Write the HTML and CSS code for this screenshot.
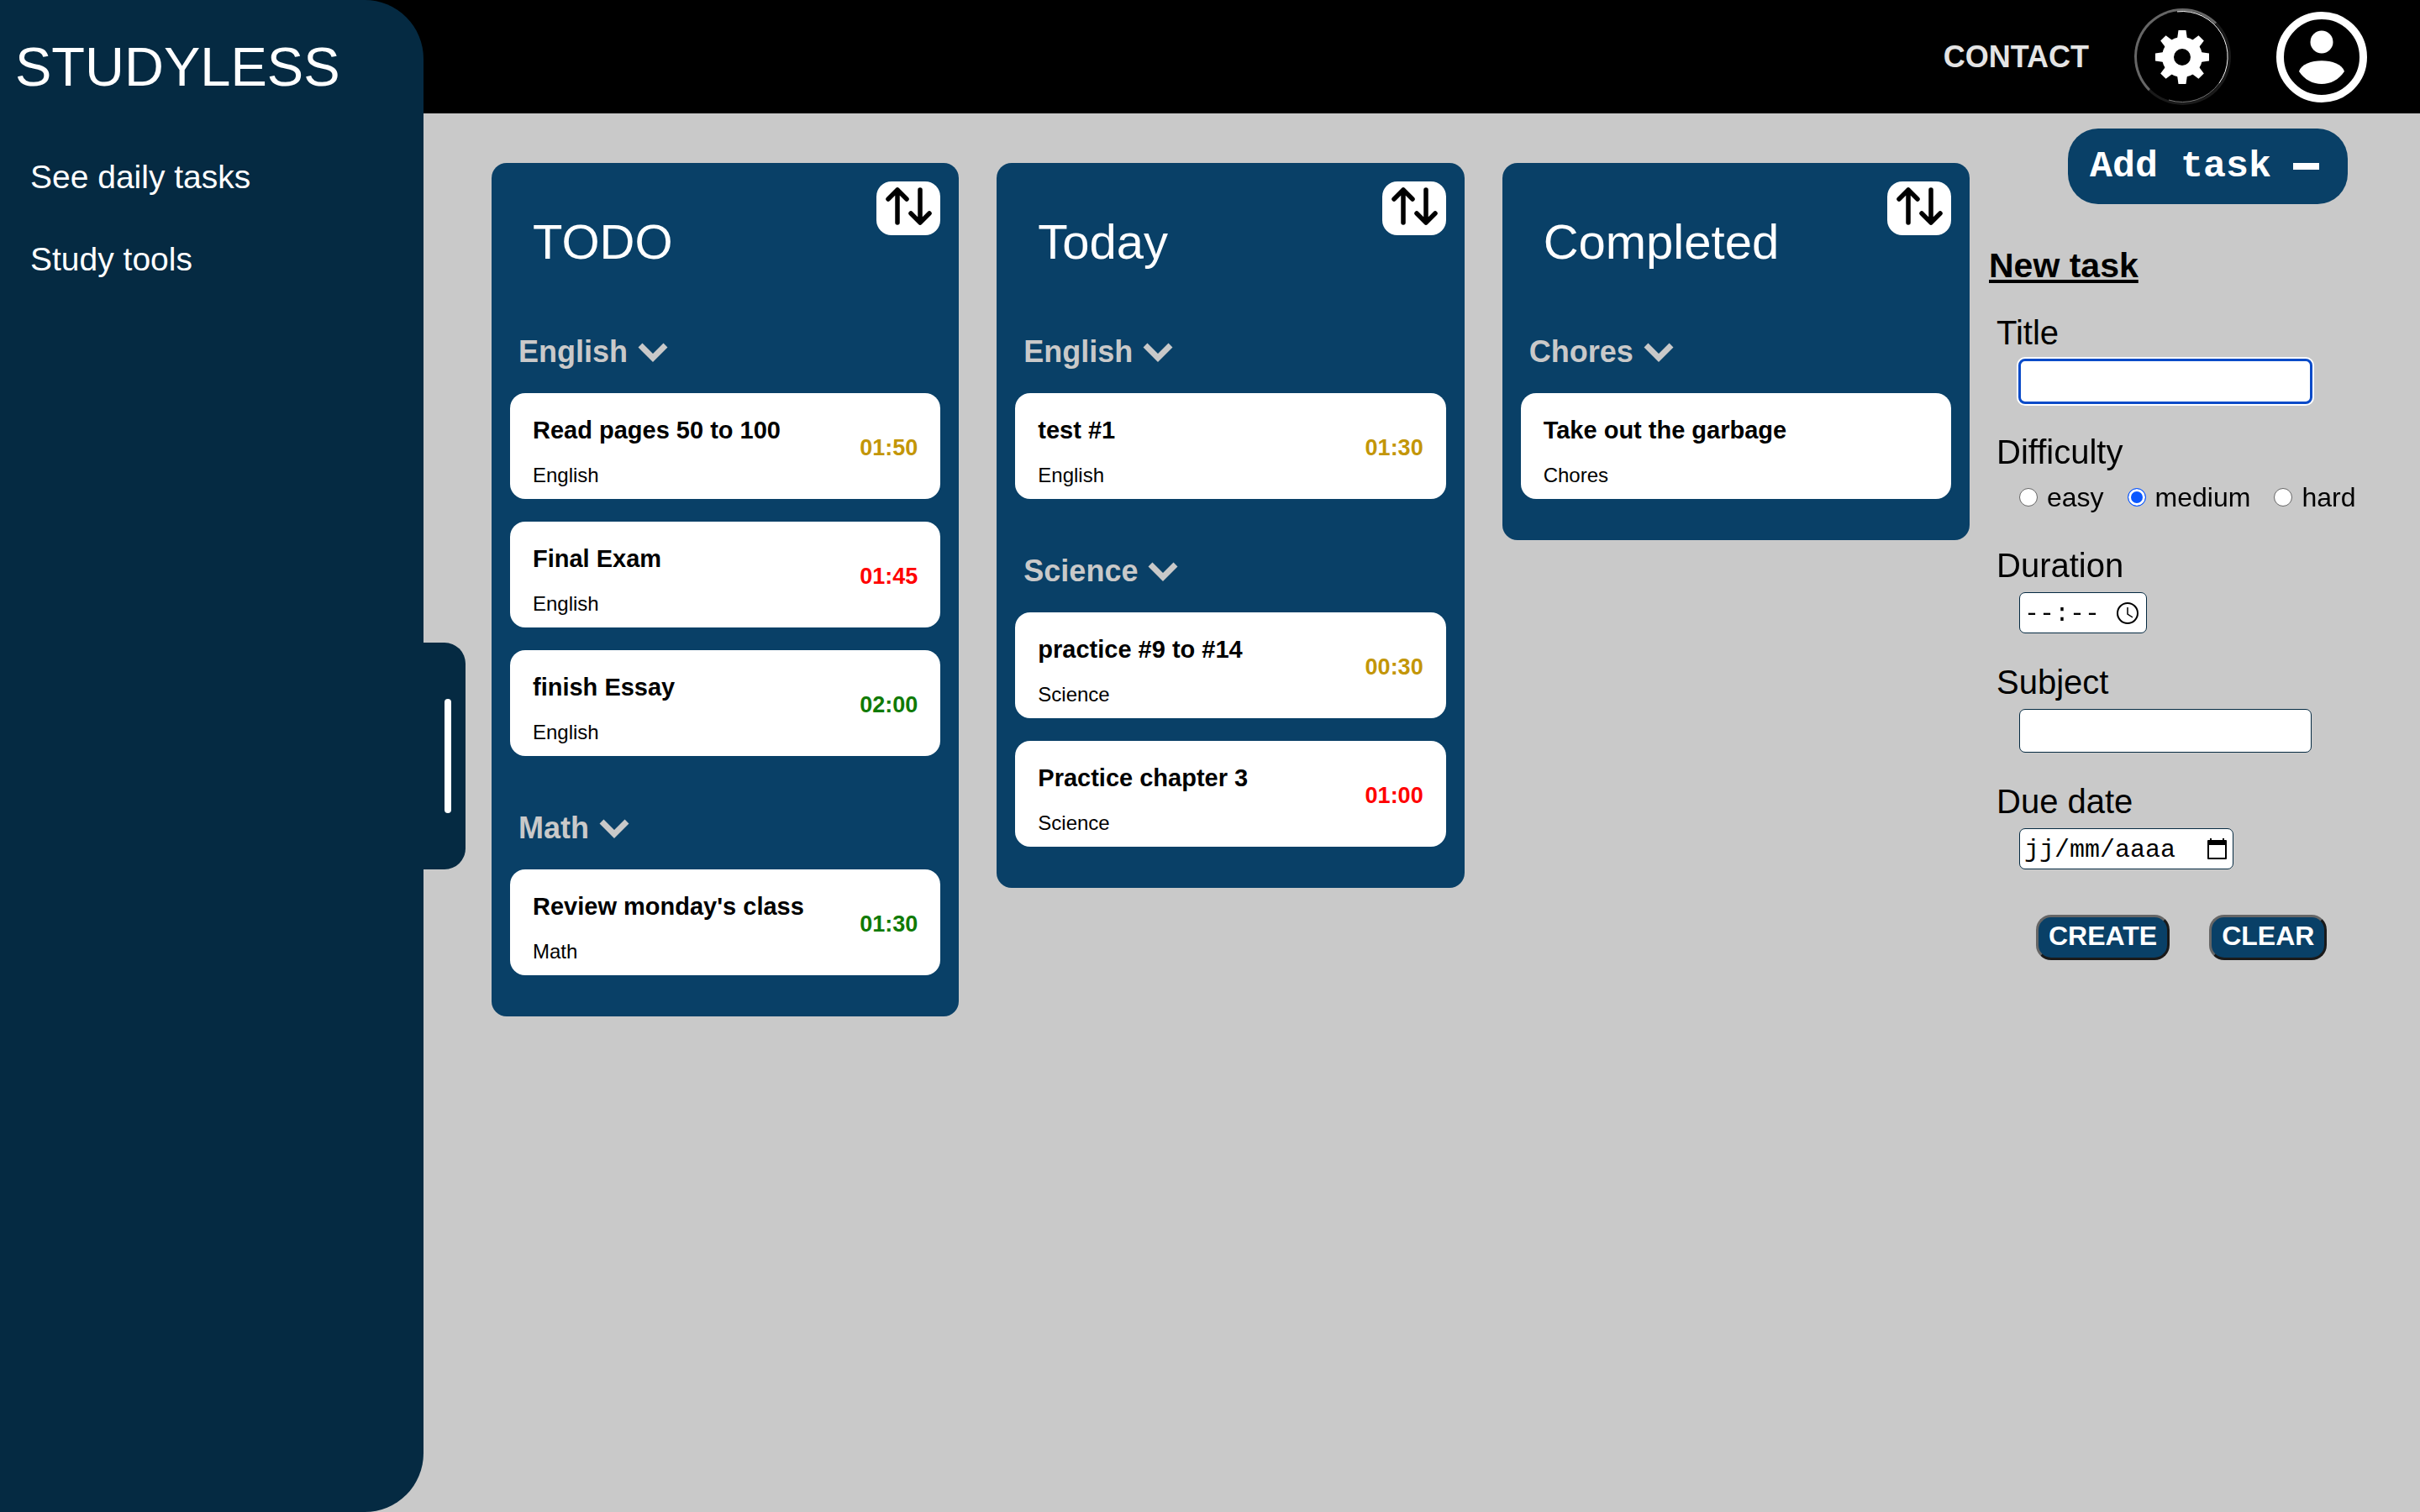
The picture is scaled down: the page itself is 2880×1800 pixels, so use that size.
FILE: index.html
```html
<!DOCTYPE html>
<html lang="en">
<head>
<meta charset="utf-8">
<title>Studyless</title>
<link rel="stylesheet" href="styles.css">
</head>
<body>
<svg class="sprite" aria-hidden="true">
  <symbol id="chevron" viewBox="0 0 36 24"><path d="M3 4 18 19 33 4" fill="none" stroke="currentColor" stroke-width="7"/></symbol>
  <symbol id="sort" viewBox="0 0 56 46"><path d="M15 43V4M4 15 15 4 26 15M42 4V43M31 32 42 43 53 32" fill="none" stroke="currentColor" stroke-width="5.5" stroke-linecap="round" stroke-linejoin="round"/></symbol>
</svg>
<div class="app">
  <aside class="sidebar">
    <h1 class="brand">STUDYLESS</h1>
    <nav class="side-nav">
      <a href="#daily">See daily tasks</a>
      <a href="#tools">Study tools</a>
    </nav>
    <button class="handle" type="button" aria-label="Toggle menu"><span class="handle-bar"></span></button>
  </aside>
  <div class="page">
    <header class="topbar">
      <a class="contact" href="#contact">CONTACT</a>
      <button class="gear" type="button" aria-label="Settings">
        <svg viewBox="0 0 109 109" aria-hidden="true">
          <path d="M48 .9A54 54 0 0 1 98 86" fill="none" stroke="#fff"/>
          <path d="M98 86A54 54 0 0 1 38 106" fill="none" stroke="#777"/>
          <g fill="#fff" transform="translate(21 22)"><path id="tooth" d="M28.500 1h9l2 14h-13z"/><use href="#tooth" transform="rotate(45 33 33)"/><use href="#tooth" transform="rotate(90 33 33)"/><use href="#tooth" transform="rotate(135 33 33)"/><use href="#tooth" transform="rotate(180 33 33)"/><use href="#tooth" transform="rotate(225 33 33)"/><use href="#tooth" transform="rotate(270 33 33)"/><use href="#tooth" transform="rotate(315 33 33)"/><circle cx="33" cy="33" r="17" fill="none" stroke="#fff" stroke-width="14"/></g>
        </svg>
      </button>
      <button class="profile" type="button" aria-label="Profile">
        <svg viewBox="0 0 108 108" aria-hidden="true"><circle cx="54" cy="54" r="49.500" fill="none" stroke="#fff" stroke-width="9"/><circle cx="54" cy="36" r="13.500" fill="#fff"/><path d="M27 71C32 54 76 54 81 71 68 91 40 91 27 71z" fill="#fff"/></svg>
      </button>
    </header>
    <div class="content">
      <main class="board">
        <section class="column">
          <div class="column-head"><h2>TODO</h2><button class="sort" type="button" aria-label="Sort"><svg><use href="#sort"/></svg></button></div>
          <div class="group">
            <button class="group-name" type="button">English<svg><use href="#chevron"/></svg></button>
            <article class="task"><div class="task-text"><h3>Read pages 50 to 100</h3><p>English</p></div><span class="time medium">01:50</span></article>
            <article class="task"><div class="task-text"><h3>Final Exam</h3><p>English</p></div><span class="time hard">01:45</span></article>
            <article class="task"><div class="task-text"><h3>finish Essay</h3><p>English</p></div><span class="time easy">02:00</span></article>
          </div>
          <div class="group">
            <button class="group-name" type="button">Math<svg><use href="#chevron"/></svg></button>
            <article class="task"><div class="task-text"><h3>Review monday's class</h3><p>Math</p></div><span class="time easy">01:30</span></article>
          </div>
        </section>
        <section class="column">
          <div class="column-head"><h2>Today</h2><button class="sort" type="button" aria-label="Sort"><svg><use href="#sort"/></svg></button></div>
          <div class="group">
            <button class="group-name" type="button">English<svg><use href="#chevron"/></svg></button>
            <article class="task"><div class="task-text"><h3>test #1</h3><p>English</p></div><span class="time medium">01:30</span></article>
          </div>
          <div class="group">
            <button class="group-name" type="button">Science<svg><use href="#chevron"/></svg></button>
            <article class="task"><div class="task-text"><h3>practice #9 to #14</h3><p>Science</p></div><span class="time medium">00:30</span></article>
            <article class="task"><div class="task-text"><h3>Practice chapter 3</h3><p>Science</p></div><span class="time hard">01:00</span></article>
          </div>
        </section>
        <section class="column">
          <div class="column-head"><h2>Completed</h2><button class="sort" type="button" aria-label="Sort"><svg><use href="#sort"/></svg></button></div>
          <div class="group">
            <button class="group-name" type="button">Chores<svg><use href="#chevron"/></svg></button>
            <article class="task"><div class="task-text"><h3>Take out the garbage</h3><p>Chores</p></div></article>
          </div>
        </section>
      </main>
      <aside class="panel">
        <button class="add" type="button">Add task<span class="minus"></span></button>
        <form class="form">
          <h2>New task</h2>
          <div class="field">
            <label for="title">Title</label>
            <input class="box" id="title" type="text" autofocus>
          </div>
          <fieldset class="field">
            <legend>Difficulty</legend>
            <div class="levels">
              <label><input type="radio" name="level">easy</label>
              <label><input type="radio" name="level" checked>medium</label>
              <label><input type="radio" name="level">hard</label>
            </div>
          </fieldset>
          <div class="field">
            <label for="duration">Duration</label>
            <div class="box picker picker-time">
              <input id="duration" type="text" placeholder="--:--">
              <svg viewBox="0 0 26 26" aria-hidden="true"><g fill="none" stroke="#000"><circle cx="13" cy="13" r="12" stroke-width="2"/><path d="M13 6v8l6 4" stroke-width="1.500"/></g></svg>
            </div>
          </div>
          <div class="field">
            <label for="subject">Subject</label>
            <input class="box" id="subject" type="text">
          </div>
          <div class="field">
            <label for="due">Due date</label>
            <div class="box picker picker-date">
              <input id="due" type="text" placeholder="jj/mm/aaaa">
              <svg viewBox="0 0 26 26" aria-hidden="true"><path d="M3 3h21v21H3z" fill="none" stroke="#000" stroke-width="2" stroke-linejoin="round"/><path d="M2 3h23v5H2zM5 0h2v4H5zM20 0h2v4h-2z"/></svg>
            </div>
          </div>
          <div class="actions">
            <button type="button">CREATE</button>
            <button type="reset">CLEAR</button>
          </div>
        </form>
      </aside>
    </div>
  </div>
</div>
</body>
</html>
```
FILE: styles.css
```css
:root {
  --navy: #052a42;
  --blue: #094067;
  --grey: #c9c9c9;
  --mono: "Courier", "Liberation Mono", monospace;
}

* {
  box-sizing: border-box;
}

body {
  margin: 0;
  background: var(--grey);
  color: #000;
  font-family: Helvetica, "Liberation Sans", sans-serif;
}

h1, h2, h3, p {
  margin: 0;
}

button {
  padding: 0;
  border: 0;
  background: none;
  color: inherit;
  font: inherit;
  cursor: pointer;
}

a {
  text-decoration: none;
}

.sprite {
  position: absolute;
  width: 0;
  height: 0;
}

.app {
  display: grid;
  grid-template-columns: 35fr 165fr;
  min-height: 100vh;
  background: linear-gradient(#000 0 135px, var(--grey) 135px);
}

/* Sidebar */
.sidebar {
  position: relative;
  padding: 43px 18px;
  border-radius: 0 70px 70px 0;
  background: var(--navy);
  color: #fff;
}

.brand {
  font-size: 65px;
  font-weight: 400;
  line-height: 74px;
}

.side-nav {
  display: flex;
  flex-direction: column;
  gap: 54px;
  padding: 72px 18px;
}

.side-nav a {
  color: #fff;
  font-size: 39px;
  line-height: 44px;
}

.handle {
  position: absolute;
  top: 50%;
  left: 100%;
  display: flex;
  align-items: center;
  justify-content: center;
  width: 50px;
  height: 270px;
  margin-top: -135px;
  padding-left: 8px;
  border-radius: 0 25px 25px 0;
  background: var(--navy);
}

.handle-bar {
  width: 8px;
  height: 136px;
  border-radius: 4px;
  background: #fff;
}

/* Top bar */
.topbar {
  display: flex;
  align-items: center;
  justify-content: flex-end;
  height: 135px;
  padding-right: 63px;
}

.contact {
  margin-right: 54px;
  color: #e4e4e4;
  font-size: 36px;
  font-weight: 700;
}

.gear {
  width: 115px;
  height: 115px;
  margin-right: 54px;
  border: 3px solid;
  border-color: #666 #1a1a1a #1a1a1a #666;
  border-radius: 50%;
}

.gear svg {
  display: block;
  width: 109px;
  height: 109px;
}

.profile,
.profile svg {
  display: block;
  width: 108px;
  height: 108px;
}

/* Board */
.content {
  display: flex;
}

.board {
  display: grid;
  flex: 1;
  grid-template-columns: repeat(3, 1fr);
  gap: 45px;
  align-items: start;
  padding: 59px 0 59px 81px;
}

.column {
  padding: 22px 22px 49px;
  border-radius: 18px;
  background: var(--blue);
}

.column-head {
  display: flex;
  align-items: flex-start;
  justify-content: space-between;
  padding-left: 27px;
}

.column-head h2 {
  padding-top: 38px;
  color: #fff;
  font-size: 58px;
  font-weight: 400;
  line-height: 68px;
}

.sort {
  width: 76px;
  height: 64px;
  padding-bottom: 6px;
  border-radius: 18px;
  background: #fff;
  color: #000;
}

.sort svg {
  width: 56px;
  height: 46px;
  vertical-align: middle;
}

.group {
  display: flex;
  flex-direction: column;
  gap: 27px;
  padding-top: 77px;
}

.group + .group {
  padding-top: 66px;
}

.group-name {
  display: flex;
  gap: 12px;
  align-items: center;
  margin-bottom: 2px;
  padding-left: 10px;
  color: var(--grey);
  font-size: 36px;
  font-weight: 700;
  line-height: 40px;
}

.group-name svg {
  width: 36px;
  height: 24px;
}

.task {
  display: flex;
  align-items: center;
  justify-content: space-between;
  height: 126px;
  padding: 4px 27px 0;
  border-radius: 18px;
  background: #fff;
}

.task-text {
  padding-top: 10px;
}

.task h3 {
  font-size: 29px;
  line-height: 32px;
}

.task p {
  padding-top: 24px;
  font-size: 24px;
  line-height: 28px;
}

.time {
  font-size: 27px;
  font-weight: 700;
}

.medium { color: #c39608; }
.hard { color: #f00; }
.easy { color: #107a05; }

/* New task panel */
.panel {
  display: flex;
  flex-direction: column;
  width: 536px;
  padding: 18px 23px;
}

.add {
  display: flex;
  gap: 26px;
  align-items: center;
  align-self: flex-end;
  height: 90px;
  margin-right: 63px;
  padding: 0 34px 0 26px;
  border-radius: 36px;
  background: var(--blue);
  color: #fff;
  font-family: var(--mono);
  font-size: 45px;
  font-weight: 700;
}

.minus {
  width: 31px;
  height: 8px;
  background: #fff;
}

.form {
  display: flex;
  flex-direction: column;
  gap: 35px;
  padding-top: 51px;
}

.form h2 {
  font-size: 41px;
  line-height: 44px;
  text-decoration: underline;
}

.field {
  margin: 0;
  padding: 0 0 0 9px;
  border: 0;
}

.field > label,
.field > legend {
  display: block;
  padding: 0;
  font-size: 40px;
  line-height: 46px;
}

.box {
  display: block;
  width: 348px;
  height: 52px;
  margin: 9px 0 0 27px;
  border: 1px solid var(--navy);
  border-radius: 7px;
  background: #fff;
}

.box:focus {
  outline: 3px solid #0a4bc8;
  outline-offset: -2px;
  box-shadow: 0 0 0 3px #fff;
}

.picker {
  display: flex;
  align-items: center;
  justify-content: space-between;
  height: 49px;
  padding: 0 6px 0 5px;
}

.picker input {
  flex: 1;
  min-width: 0;
  padding: 3px 0 0;
  border: 0;
  outline: 0;
  background: none;
  font: 30px var(--mono);
}

.picker input::placeholder {
  color: #000;
}

.picker svg {
  width: 26px;
  height: 26px;
}

.picker-time {
  width: 152px;
  padding-right: 9px;
}

.picker-date {
  width: 255px;
}

.levels {
  display: flex;
  gap: 28px;
  padding: 12px 0 4px 27px;
}

.levels label {
  display: flex;
  gap: 11px;
  align-items: center;
  font-size: 32px;
  line-height: 38px;
}

.levels input {
  width: 22px;
  height: 22px;
  margin: 0;
  border: 1px solid #666;
  border-radius: 50%;
  background: #fff;
  appearance: none;
}

.levels input:checked {
  border-color: #0b57ff;
  background: #0b57ff;
  box-shadow: inset 0 0 0 3px #fff;
}

.actions {
  display: flex;
  gap: 47px;
  padding: 19px 0 0 56px;
}

.actions button {
  height: 54px;
  padding: 0 12px 3px;
  border: 3px solid;
  border-color: #666 #1a1a1a #1a1a1a #666;
  border-radius: 18px;
  background: var(--blue);
  color: #fff;
  font-size: 32px;
  font-weight: 700;
}
```
